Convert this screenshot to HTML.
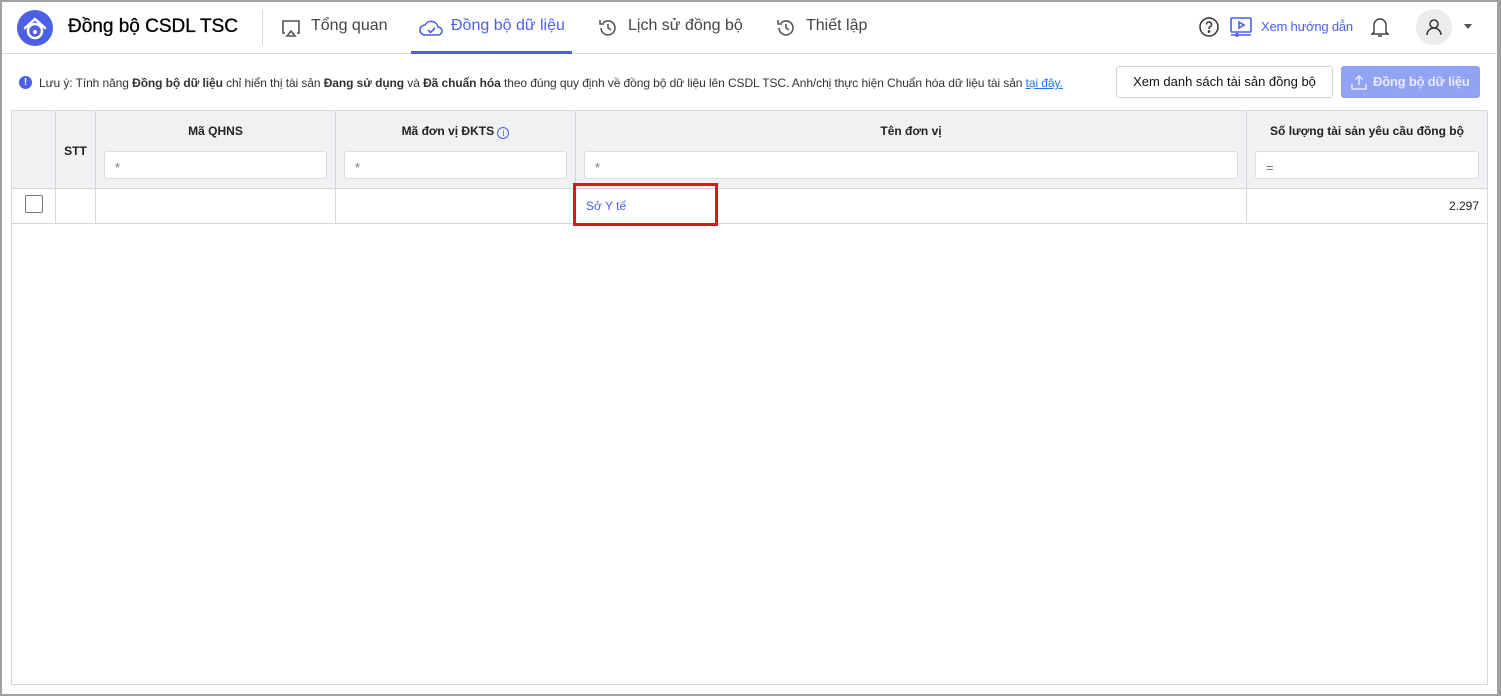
<!DOCTYPE html>
<html><head><meta charset="utf-8"><style>
*{margin:0;padding:0;box-sizing:border-box}
body{width:1501px;height:696px;overflow:hidden;background:#a0a0a0;font-family:"Liberation Sans",sans-serif;color:#212121;position:relative}
.page{position:absolute;left:2px;top:2px;width:1495px;height:692px;background:#fff}
.a{position:absolute;white-space:nowrap}
.hdr{position:absolute;left:0;top:0;width:1495px;height:52px;border-bottom:1px solid #d8d8e0}
.tab{font-size:16px;color:#444;top:15px}
.tbl{position:absolute;left:9px;top:108px;width:1477px;height:575px;border:1px solid #d6d6dc}
.th{position:absolute;top:0;height:78px;background:#f0f1f3;border-right:1px solid #d6d6dc;border-bottom:1px solid #d6d6dc}
.td{position:absolute;top:78px;height:35px;border-right:1px solid #d6d6dc;border-bottom:1px solid #d6d6dc}
.ht{position:absolute;top:13px;left:0;right:0;text-align:center;font-size:12px;font-weight:bold;color:#222}
.inp{position:absolute;top:40px;left:8px;right:8px;height:28px;background:#fff;border:1px solid #dcdce0;border-radius:3px;font-size:13px;color:#777;padding:8px 0 0 10px}
</style></head><body><div class="page">
<div class="hdr">
 <svg class="a" style="left:14px;top:7px" width="38" height="38" viewBox="0 0 38 38"><circle cx="19" cy="19" r="18" fill="#4d5fe3"/><path d="M9 19 L19 10 L29 19" fill="none" stroke="#fff" stroke-width="2.5" stroke-linecap="round" stroke-linejoin="round"/><circle cx="19" cy="22" r="7" fill="none" stroke="#fff" stroke-width="2.5"/><circle cx="19" cy="23" r="2" fill="#fff"/></svg>
 <div class="a" style="left:66px;top:14px;font-size:19px;color:#000;-webkit-text-stroke:0.3px #000">Đồng bộ CSDL TSC</div>
 <div class="a" style="left:260px;top:8px;width:1px;height:35px;background:#d8d8dc"></div>
 <svg class="a" style="left:278px;top:15px" width="22" height="22" viewBox="0 0 22 22" fill="none" stroke="#555" stroke-width="1.6"><path d="M5 16H3V4h16v12h-2"/><path d="M7 19l4-5 4 5z"/></svg>
 <div class="a tab" style="left:309px">Tổng quan</div>
 <svg class="a" style="left:417px;top:15px" width="24" height="22" viewBox="0 0 24 22" fill="none" stroke="#4a5fe6" stroke-width="1.6"><path d="M6 18a5 5 0 0 1 0-10 7 7 0 0 1 13 2 4 4 0 0 1 0 8z"/><path d="M9 13l2.5 2.5L16 11"/></svg>
 <div class="a tab" style="left:449px;color:#4a5fe6">Đồng bộ dữ liệu</div>
 <div class="a" style="left:409px;top:49px;width:161px;height:3px;background:#4a5fe6"></div>
 <svg class="a" style="left:595px;top:15px" width="22" height="22" viewBox="0 0 22 22" fill="none" stroke="#555" stroke-width="1.6"><path d="M4 11a7 7 0 1 0 2-5"/><path d="M3 3v4h4"/><path d="M11 7v4l3 2"/></svg>
 <div class="a tab" style="left:626px">Lịch sử đồng bộ</div>
 <svg class="a" style="left:773px;top:15px" width="22" height="22" viewBox="0 0 22 22" fill="none" stroke="#555" stroke-width="1.6"><path d="M4 11a7 7 0 1 0 2-5"/><path d="M3 3v4h4"/><path d="M11 7v4l3 2"/></svg>
 <div class="a tab" style="left:804px">Thiết lập</div>
 <svg class="a" style="left:1196px;top:14px" width="22" height="22" viewBox="0 0 22 22" fill="none" stroke="#333" stroke-width="1.5"><circle cx="11" cy="11" r="9"/><path d="M8.5 8.5a2.5 2.5 0 1 1 3.5 2.3c-.7.3-1 .8-1 1.6v.6"/><circle cx="11" cy="15.5" r=".6" fill="#333"/></svg>
 <svg class="a" style="left:1227px;top:14px" width="24" height="22" viewBox="0 0 24 22" fill="none" stroke="#4a5fe6" stroke-width="1.6"><rect x="2" y="2" width="20" height="14" rx="1"/><path d="M10 6v6l5-3z"/><path d="M2 19h20"/><circle cx="8" cy="19" r="1.2" fill="#fff"/></svg>
 <div class="a" style="left:1259px;top:17px;font-size:13px;color:#4a5fe6;letter-spacing:-0.2px">Xem hướng dẫn</div>
 <svg class="a" style="left:1367px;top:13px" width="22" height="24" viewBox="0 0 22 24" fill="none" stroke="#444" stroke-width="1.5"><path d="M5 17V10a6 6 0 0 1 12 0v7l2 2H3z"/><path d="M9 21h4"/></svg>
 <div class="a" style="left:1414px;top:7px;width:36px;height:36px;border-radius:50%;background:#ececec"></div>
 <svg class="a" style="left:1422px;top:15px" width="20" height="20" viewBox="0 0 20 20" fill="none" stroke="#333" stroke-width="1.5"><circle cx="10" cy="7" r="4"/><path d="M3 18a7 7 0 0 1 14 0"/></svg>
 <div class="a" style="left:1462px;top:22px;border-left:4px solid transparent;border-right:4px solid transparent;border-top:5px solid #555"></div>
</div>
<div class="a" style="left:17px;top:74px;width:13px;height:13px;border-radius:50%;background:#4a5fe6;color:#fff;font-size:10px;font-weight:bold;text-align:center;line-height:13px">!</div>
<div class="a" style="left:37px;top:74px;font-size:12px;color:#333;letter-spacing:-0.085px">Lưu ý: Tính năng <b>Đồng bộ dữ liệu</b> chỉ hiển thị tài sản <b>Đang sử dụng</b> và <b>Đã chuẩn hóa</b> theo đúng quy định về đồng bộ dữ liệu lên CSDL TSC. Anh/chị thực hiện Chuẩn hóa dữ liệu tài sản <span style="color:#1a73e8;text-decoration:underline">tại đây.</span></div>
<div class="a" style="left:1114px;top:64px;width:217px;height:32px;border:1px solid #d4d4d8;border-radius:3px;font-size:13px;color:#111;text-align:center;line-height:30px">Xem danh sách tài sản đồng bộ</div>
<div class="a" style="left:1339px;top:64px;width:139px;height:32px;background:#93a3f4;border-radius:3px;font-size:13px;font-weight:bold;color:#e6eaff;line-height:32px;padding-left:32px;letter-spacing:-0.2px">Đồng bộ dữ liệu</div>
<svg class="a" style="left:1348px;top:71px" width="18" height="18" viewBox="0 0 18 18" fill="none" stroke="#e6eaff" stroke-width="1.5"><path d="M2 11v5h14v-5"/><path d="M9 12V3M5.5 6.5L9 3l3.5 3.5"/></svg>
<div class="tbl">
 <div class="th" style="left:0;width:44px"></div>
 <div class="th" style="left:44px;width:40px"><div class="ht" style="top:33px">STT</div></div>
 <div class="th" style="left:84px;width:240px"><div class="ht">Mã QHNS</div><div class="inp">*</div></div>
 <div class="th" style="left:324px;width:240px"><div class="ht">Mã đơn vị ĐKTS <span style="display:inline-block;width:12px;height:12px;border:1px solid #4a5fe6;border-radius:50%;color:#4a5fe6;font-size:9px;line-height:10px;vertical-align:-1px;font-weight:normal">i</span></div><div class="inp">*</div></div>
 <div class="th" style="left:564px;width:671px"><div class="ht">Tên đơn vị</div><div class="inp">*</div></div>
 <div class="th" style="left:1235px;width:240px;border-right:none"><div class="ht">Số lượng tài sản yêu cầu đồng bộ</div><div class="inp">=</div></div>
 <div class="td" style="left:0;width:44px"><div class="a" style="left:13px;top:6px;width:18px;height:18px;border:1px solid #777;border-radius:2px"></div></div>
 <div class="td" style="left:44px;width:40px"></div>
 <div class="td" style="left:84px;width:240px"></div>
 <div class="td" style="left:324px;width:240px"></div>
 <div class="td" style="left:564px;width:671px"><div class="a" style="left:10px;top:10px;font-size:12px;color:#4a5fe6">Sở Y tế</div></div>
 <div class="td" style="left:1235px;width:240px;border-right:none"><div class="a" style="right:8px;top:10px;font-size:12px;color:#222">2.297</div></div>
 <div class="a" style="left:561px;top:72px;width:145px;height:43px;border:3px solid #e0141c"></div>
</div>
</div></body></html>
